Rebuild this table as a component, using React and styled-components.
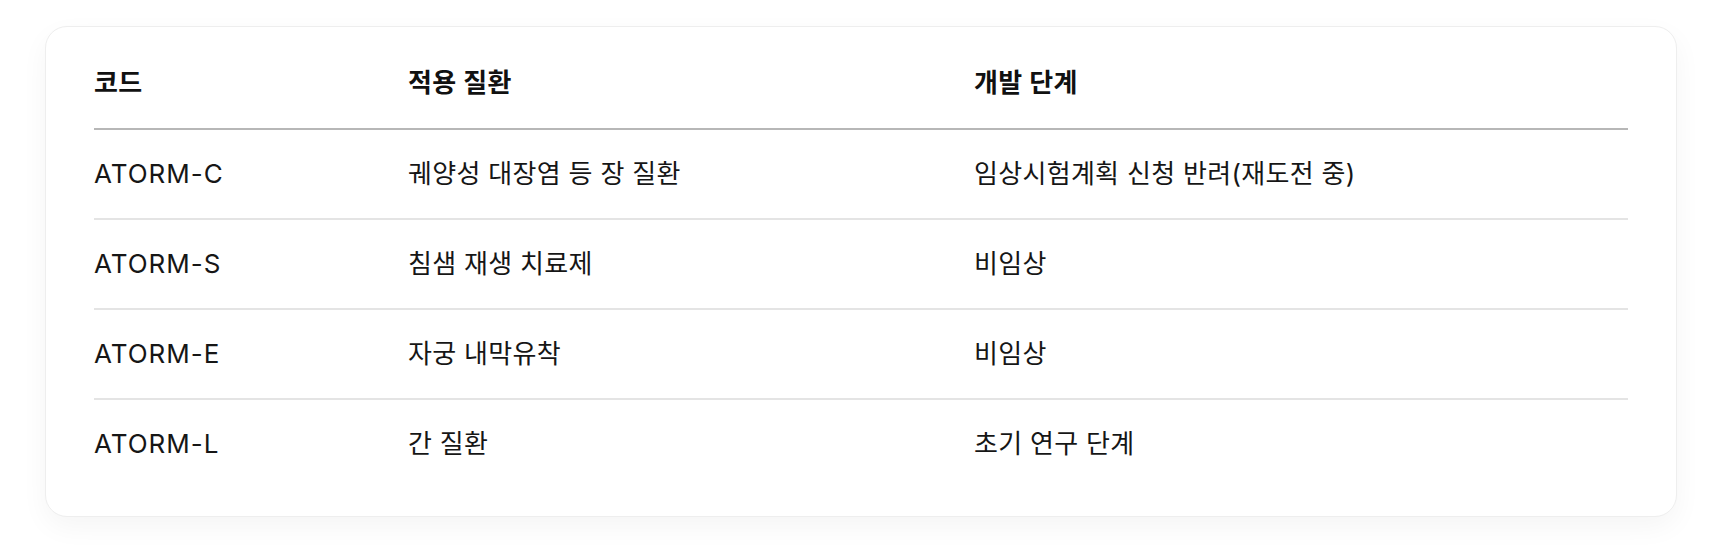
import React from "react";
import styled, { createGlobalStyle } from "styled-components";

const GlobalStyle = createGlobalStyle`
  html, body {
    margin: 0;
    padding: 0;
    background: #ffffff;
  }
  body {
    font-family: Inter, "Noto Sans CJK KR", "Noto Sans", sans-serif;
    color: #161616;
  }
`;

const Page = styled.div`
  padding: 26px 59px 38px 45px;
`;

const Card = styled.section`
  background: #ffffff;
  border: 1px solid #eeeeee;
  border-radius: 22px;
  box-shadow: 0 10px 28px rgba(0, 0, 0, 0.045);
  padding: 11px 48px 28px;
`;

const Table = styled.table`
  width: 100%;
  border-collapse: collapse;
  table-layout: fixed;
  font-size: 26px;
  line-height: 30px;
  letter-spacing: 0.3px;
`;

const Col = styled.col`
  width: ${(p) => p.$w || "auto"};
`;

const HeadCell = styled.th`
  text-align: left;
  font-weight: 600;
  color: #111111;
  padding: 30px 0;
  border-bottom: 2px solid #b7b7b7;
`;

const Row = styled.tr`
  border-bottom: 2px solid #e4e4e4;
  &:last-child {
    border-bottom: none;
  }
`;

const Cell = styled.td`
  padding: 29px 0;
  color: #161616;
  white-space: nowrap;
  letter-spacing: ${(p) => (p.$code ? "1px" : "0.3px")};
`;

const rows = [
  { code: "ATORM-C", disease: "궤양성 대장염 등 장 질환", stage: "임상시험계획 신청 반려(재도전 중)" },
  { code: "ATORM-S", disease: "침샘 재생 치료제", stage: "비임상" },
  { code: "ATORM-E", disease: "자궁 내막유착", stage: "비임상" },
  { code: "ATORM-L", disease: "간 질환", stage: "초기 연구 단계" },
];

export default function App() {
  return (
    <>
      <GlobalStyle />
      <Page>
        <Card>
          <Table>
            <colgroup>
              <Col $w="314px" />
              <Col $w="566px" />
              <Col />
            </colgroup>
            <thead>
              <tr>
                <HeadCell>코드</HeadCell>
                <HeadCell>적용 질환</HeadCell>
                <HeadCell>개발 단계</HeadCell>
              </tr>
            </thead>
            <tbody>
              {rows.map((r) => (
                <Row key={r.code}>
                  <Cell $code>{r.code}</Cell>
                  <Cell>{r.disease}</Cell>
                  <Cell>{r.stage}</Cell>
                </Row>
              ))}
            </tbody>
          </Table>
        </Card>
      </Page>
    </>
  );
}
